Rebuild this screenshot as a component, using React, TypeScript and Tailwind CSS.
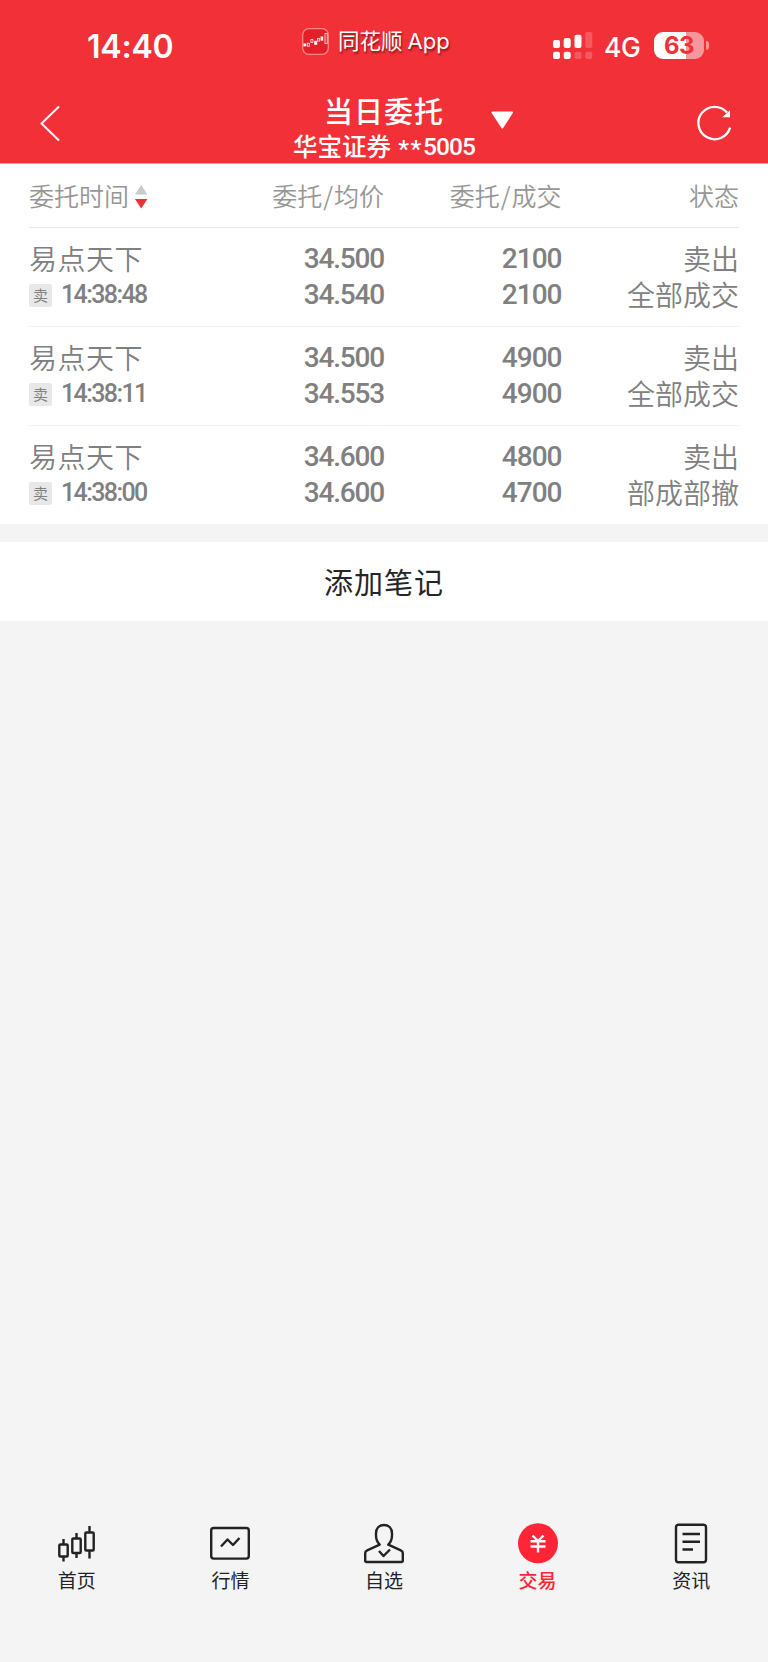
import React from "react";

interface Order {
  name: string;
  time: string;
  price: string;
  average: string;
  amount: string;
  filled: string;
  status: string;
}

const orders: Order[] = [
  {
    name: "易点天下",
    time: "14:38:48",
    price: "34.500",
    average: "34.540",
    amount: "2100",
    filled: "2100",
    status: "全部成交",
  },
  {
    name: "易点天下",
    time: "14:38:11",
    price: "34.500",
    average: "34.553",
    amount: "4900",
    filled: "4900",
    status: "全部成交",
  },
  {
    name: "易点天下",
    time: "14:38:00",
    price: "34.600",
    average: "34.600",
    amount: "4800",
    filled: "4700",
    status: "部成部撤",
  },
];

const StatusBar = () => (
  <div className="flex h-[86px] items-start font-['Inter','Noto_Sans_CJK_SC',sans-serif]">
    <div className="w-[302px] pl-[87px] pt-[27px] text-[32px] font-semibold leading-[40px] tracking-[-0.2px]">
      14:40
    </div>
    <div className="flex w-[251px] items-center pt-[27px]">
      <svg width="27" height="27" viewBox="0 0 27 27" fill="none">
        <rect x="0.7" y="0.7" width="25.6" height="25.6" rx="6" fill="#e3202a" stroke="#f6868a" strokeWidth="1.3" />
        <g fill="#fff">
          <rect x="1.500" y="15.500" width="2.800" height="2.800" />
          <rect x="12.200" y="12.800" width="3" height="4" />
          <rect x="18.600" y="8.500" width="2.600" height="4.200" />
        </g>
        <g stroke="#ffe5e5" strokeWidth="0.8">
          <rect x="5.400" y="15.200" width="2" height="3" />
          <rect x="8.900" y="11.500" width="2" height="3" />
          <rect x="15.600" y="10.500" width="2" height="2.600" />
          <rect x="23" y="5.500" width="2.200" height="10" />
        </g>
      </svg>
      <div className="flex items-center pl-[9px] leading-[28px] [text-shadow:1px_2px_2px_rgba(70,0,0,0.6)]">
        <span className="text-[21.500px]">同花顺</span>
        <span className="pl-[5px] text-[22px] tracking-[0.1px]">App</span>
      </div>
    </div>
    <svg className="mt-[32px]" width="40" height="27" viewBox="0 0 40 27" fill="#fff">
      <rect x="0" y="8" width="7" height="8" rx="2" />
      <rect x="10.700" y="6" width="7" height="10" rx="2" />
      <rect x="21.500" y="2.700" width="7" height="13.300" rx="2" />
      <rect x="32.300" y="0" width="7" height="16" rx="2" opacity="0.2" />
      <rect x="0" y="19.700" width="7" height="7.300" rx="2" />
      <rect x="10.700" y="19.700" width="7" height="7.300" rx="2" />
      <rect x="21.500" y="19.700" width="7" height="7.300" rx="2" opacity="0.2" />
      <rect x="32.300" y="19.700" width="7" height="7.300" rx="2" opacity="0.2" />
    </svg>
    <div className="w-[61px] pl-[11px] pt-[31px] text-[26.500px] font-medium leading-[32px] tracking-[-0.5px]">
      4G
    </div>
    <div className="mt-[32px] flex items-center">
      <div className="h-[27px] w-[50px] rounded-[9px] bg-[linear-gradient(90deg,#fff_32px,#f8979b_32px)] text-center text-[24px] font-bold leading-[27px] tracking-[-0.5px] text-[#f23037]">
        63
      </div>
      <div className="ml-[2px] h-[9px] w-[3px] rounded-r-full bg-[#f8979b]" />
    </div>
  </div>
);

const TitleBar = () => (
  <div className="flex h-[77px] items-start">
    <div className="w-[293px] pl-[39px] pt-[19px]">
      <svg width="22" height="37" viewBox="0 0 22 37" fill="none" stroke="#fff" strokeWidth="2">
        <path d="M20 1.500 2.500 18.500 20 35.500" />
      </svg>
    </div>
    <div className="w-[182px] text-center">
      <h1 className="mt-[5px] text-[29px] font-medium leading-[38px] tracking-[1px]">当日委托</h1>
      <p className="flex items-center justify-between font-['Roboto','Noto_Sans_CJK_SC',sans-serif] text-[24.500px] font-medium leading-[34px]">
        <span>华宝证券</span>
        <span className="flex">
          <span className="pt-[3px] tracking-[1.500px]">**</span>
          <span className="pt-px tracking-[-0.900px]">5005</span>
        </span>
      </p>
    </div>
    <svg className="ml-[16px] mt-[25px]" width="23" height="19" viewBox="0 0 23 19" fill="#fff" stroke="#fff" strokeWidth="2" strokeLinejoin="round">
      <path d="M1.500 1.500h19.500L11.300 16.500Z" />
    </svg>
    <svg className="ml-[182px] mt-[19px]" width="36" height="38" viewBox="0 0 36 38" fill="none">
      <path d="M34.100 22.700A16.200 16.200 0 1 1 31 7.600" stroke="#fff" strokeWidth="2.300" />
      <path d="M34 5.300v6.900h-7.700Z" fill="#fff" />
    </svg>
  </div>
);

const OrderRow = ({ order }: { order: Order }) => (
  <div className="grid h-[99px] grid-cols-4 border-b border-[#f3f3f3] pt-[12px] text-right text-[28px] leading-[36px] text-[#808080] last:h-[98px] last:border-b-0">
    <div className="text-left">
      <div className="font-[350] tracking-[0.500px]">{order.name}</div>
      <div className="flex h-[36px] items-center">
        <span className="mt-[3px] h-[23px] w-[23px] rounded-[2px] bg-[#e8e8e8] text-center text-[15px] leading-[22px]">
          卖
        </span>
        <span className="pl-[9px] pt-[2px] font-['Roboto'] text-[25px] font-medium tracking-[-1.600px]">
          {order.time}
        </span>
      </div>
    </div>
    <div className="pt-px font-['Roboto'] font-medium tracking-[-1.200px]">
      <div>{order.price}</div>
      <div>{order.average}</div>
    </div>
    <div className="pt-px font-['Roboto'] font-medium tracking-[-1px]">
      <div>{order.amount}</div>
      <div>{order.filled}</div>
    </div>
    <div className="font-[350]">
      <div>卖出</div>
      <div>{order.status}</div>
    </div>
  </div>
);

const navItems = [
  {
    label: "首页",
    icon: (
      <>
        <path d="M6.500 16v5.500M6.500 34v4.500M19.500 10v5.500M19.500 30v5M32.500 3v6.500M32.500 28v7.500" />
        <rect x="2.300" y="21.500" width="8.400" height="12" rx="1" />
        <rect x="15.300" y="15.500" width="8.400" height="14.500" rx="1" />
        <rect x="28.300" y="9.500" width="8.400" height="18" rx="1" />
      </>
    ),
  },
  {
    label: "行情",
    icon: (
      <>
        <rect x="1.200" y="5" width="37.600" height="30.600" rx="2.500" />
        <path d="m11 23.500 6.500-7 5.500 5.500 6.500-7" />
      </>
    ),
  },
  {
    label: "自选",
    icon: (
      <>
        <path d="M15.700 21.700C13 19 12 16.200 12 12.500v-2C12 5.500 15 2 20 2s8 3.500 8 8.500v2c0 3.700-1 6.500-3.700 9.200l12.500 5.600c1.400.6 2 1.500 2 2.700v7.500c0 1-.5 1.500-1.500 1.500H2.700c-1 0-1.500-.5-1.500-1.500V30c0-1.200.6-2.100 2-2.700Z" />
        <path d="m15 28 4.500 5 6.500-6.500" />
      </>
    ),
  },
  {
    label: "交易",
    active: true,
    icon: (
      <>
        <circle cx="20" cy="20.300" r="20" fill="#ff2436" stroke="none" />
        <path d="m14.500 12.500 5.500 5.500 5.500-5.500M20 18v11.500M12.500 18.300h15M12.500 23.500h15" stroke="#fff" />
      </>
    ),
  },
  {
    label: "资讯",
    icon: (
      <>
        <rect x="5" y="1.700" width="30" height="37.600" rx="2.500" />
        <path d="M11.500 11H29M11.500 18.700H29M11.500 26.500H22" />
      </>
    ),
  },
];

const App: React.FC = () => {
  return (
    <div className="flex h-[1662px] w-[768px] flex-col overflow-hidden bg-[#f4f4f4] font-['Noto_Sans_CJK_SC',sans-serif]">
      <header className="h-[164px] shrink-0 border-b border-[#f9a0a3] bg-[#f23037] text-white">
        <StatusBar />
        <TitleBar />
      </header>

      {/* Orders */}
      <main className="bg-white px-[29px]">
        <div className="grid h-[64px] grid-cols-4 border-b border-[#e9e9e9] pt-[13px] text-right text-[25px] font-[350] leading-[36px] text-[#969696]">
          <div className="flex h-[36px] items-center text-left">
            委托时间
            <svg className="ml-[6px] mt-[4px]" width="13" height="24" viewBox="0 0 13 24">
              <path d="M6.200 0 12.400 9.500H0Z" fill="#c9c9c9" />
              <path d="M0 14h12.400L6.200 23.500Z" fill="#ef2f35" />
            </svg>
          </div>
          <div>
            委托<span className="px-px">/</span>均价
          </div>
          <div>
            委托<span className="px-px">/</span>成交
          </div>
          <div>状态</div>
        </div>
        <div>
          {orders.map((order) => (
            <OrderRow key={order.time} order={order} />
          ))}
        </div>
      </main>

      <button className="mt-[18px] h-[79px] shrink-0 bg-white text-[29px] leading-[79px] tracking-[1px] text-[#262626]">
        添加笔记
      </button>

      {/* Bottom navigation */}
      <nav className="mt-auto grid h-[139px] shrink-0 grid-cols-5">
        {navItems.map((item) => (
          <div
            key={item.label}
            className={`flex flex-col items-center ${item.active ? "font-medium text-[#ff2436]" : "text-[#222]"}`}
          >
            <svg width="40" height="41" viewBox="0 0 40 41" fill="none" stroke="currentColor" strokeWidth="2.400" strokeLinejoin="round">
              {item.icon}
            </svg>
            <span className="mt-[2px] text-[19px] leading-[28px]">{item.label}</span>
          </div>
        ))}
      </nav>
    </div>
  );
};

export default App;
